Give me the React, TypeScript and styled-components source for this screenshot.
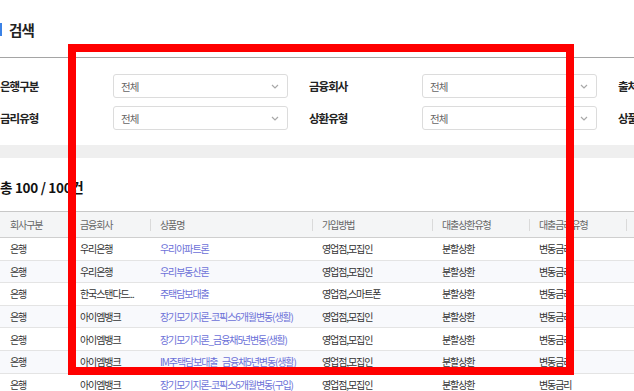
import styled, { createGlobalStyle } from 'styled-components';

const GlobalStyle = createGlobalStyle`
    html, body {
        margin: 0;
        padding: 0;
        background: #ffffff;
        overflow: hidden;
    }
    body {
        font-family: 'Noto Sans CJK KR', 'Noto Sans', sans-serif;
        color: #222222;
    }
`;

const Page = styled.div`
    position: relative;
    width: 1000px;
    height: 391px;
`;

const TitleBar = styled.div`
    height: 58px;
    display: flex;
    align-items: center;
    gap: 7px;
    padding-top: 2px;
    box-sizing: border-box;
    border-bottom: 1px solid #a5a5a5;
`;

const Accent = styled.span`
    width: 2px;
    height: 13px;
    background: #3b82e6;
`;

const Title = styled.h1`
    margin: 0;
    font-size: 14.5px;
    font-weight: 700;
    letter-spacing: -0.8px;
    color: #222222;
`;

const Form = styled.div`
    padding: 16px 0 15px;
    display: flex;
    flex-direction: column;
    gap: 8px;
`;

const FormRow = styled.div`
    display: flex;
    height: 24px;
`;

const Field = styled.div`
    display: flex;
    align-items: center;
    width: 309px;
    flex-shrink: 0;
`;

const Label = styled.span`
    width: 113px;
    font-size: 11.5px;
    font-weight: 700;
    letter-spacing: -1px;
    color: #222222;
`;

const Select = styled.div`
    width: 175px;
    height: 24px;
    box-sizing: border-box;
    border: 1px solid #dcdcdc;
    border-radius: 3px;
    display: flex;
    align-items: center;
    justify-content: space-between;
    padding: 0 8px 0 7px;
    font-size: 10.5px;
    letter-spacing: -0.8px;
    color: #666666;
`;

const Band = styled.div`
    height: 13px;
    background: #efefef;
`;

const Count = styled.div`
    height: 53px;
    display: flex;
    align-items: center;
    padding-top: 4px;
    box-sizing: border-box;
    font-size: 13.5px;
    font-weight: 700;
    letter-spacing: -0.3px;
    color: #111111;
`;

const Table = styled.div`
    border-top: 1px solid #c8c8c8;
`;

const Cols = '70px 80px 162px 120px 97px 97px 200px';

const HeadRow = styled.div`
    display: grid;
    grid-template-columns: ${Cols};
    height: 26px;
    background: #f4f5f6;
    border-bottom: 1px solid #cfcfcf;
    box-sizing: border-box;
`;

const HeadCell = styled.div<{ $first?: boolean }>`
    display: flex;
    align-items: center;
    padding-left: 10px;
    font-size: 10px;
    letter-spacing: -1.1px;
    color: #666666;
    position: relative;
    &::before {
        content: '';
        display: ${(p) => (p.$first ? 'none' : 'block')};
        position: absolute;
        left: 0;
        top: 7px;
        width: 1px;
        height: 12px;
        background: #dadada;
    }
`;

const Row = styled.div<{ $alt: boolean }>`
    display: grid;
    grid-template-columns: ${Cols};
    height: 22.6px;
    box-sizing: border-box;
    background: ${(p) => (p.$alt ? '#f8f9fc' : '#ffffff')};
    border-bottom: 1px solid #e4e4e4;
`;

const Cell = styled.div<{ $link?: boolean }>`
    display: flex;
    align-items: center;
    padding-left: 10px;
    font-size: 10px;
    letter-spacing: -1.1px;
    white-space: nowrap;
    overflow: hidden;
    color: ${(p) => (p.$link ? '#6c71d8' : '#333333')};
`;

const Highlight = styled.div`
    position: absolute;
    left: 68px;
    top: 44px;
    width: 506px;
    height: 331px;
    box-sizing: border-box;
    border: 8px solid #ff0000;
    pointer-events: none;
`;

function Chevron() {
    return (
        <svg width="8" height="5" viewBox="0 0 8 5">
            <polyline points="1,1 4,4 7,1" fill="none" stroke="#a8a8a8" strokeWidth="1.2" />
        </svg>
    );
}

const fields = [
    ['은행구분', '금융회사', '출처구분'],
    ['금리유형', '상환유형', '상품유형'],
];

const heads = ['회사구분', '금융회사', '상품명', '가입방법', '대출상환유형', '대출금리유형', ''];

const rows = [
    ['은행', '우리은행', '우리아파트론', '영업점,모집인'],
    ['은행', '우리은행', '우리부동산론', '영업점,모집인'],
    ['은행', '한국스탠다드...', '주택담보대출', '영업점,스마트폰'],
    ['은행', '아이엠뱅크', '장기모기지론-코픽스6개월변동(생활)', '영업점,모집인'],
    ['은행', '아이엠뱅크', '장기모기지론_금융채5년변동(생활)', '영업점,모집인'],
    ['은행', '아이엠뱅크', 'IM주택담보대출_금융채5년변동(생활)', '영업점,모집인'],
    ['은행', '아이엠뱅크', '장기모기지론-코픽스6개월변동(구입)', '영업점,모집인'],
];

function App() {
    return (
        <Page>
            <GlobalStyle />
            <TitleBar>
                <Accent />
                <Title>검색</Title>
            </TitleBar>
            <Form>
                {fields.map((line, i) => (
                    <FormRow key={i}>
                        {line.map((name) => (
                            <Field key={name}>
                                <Label>{name}</Label>
                                <Select>
                                    <span>전체</span>
                                    <Chevron />
                                </Select>
                            </Field>
                        ))}
                    </FormRow>
                ))}
            </Form>
            <Band />
            <Count>총 100 / 100건</Count>
            <Table>
                <HeadRow>
                    {heads.map((h, i) => (
                        <HeadCell key={i} $first={i === 0}>
                            {h}
                        </HeadCell>
                    ))}
                </HeadRow>
                {rows.map((r, i) => (
                    <Row key={i} $alt={i % 2 === 1}>
                        <Cell>{r[0]}</Cell>
                        <Cell>{r[1]}</Cell>
                        <Cell $link>{r[2]}</Cell>
                        <Cell>{r[3]}</Cell>
                        <Cell>분할상환</Cell>
                        <Cell>변동금리</Cell>
                        <Cell />
                    </Row>
                ))}
            </Table>
            <Highlight />
        </Page>
    );
}

export default App;
